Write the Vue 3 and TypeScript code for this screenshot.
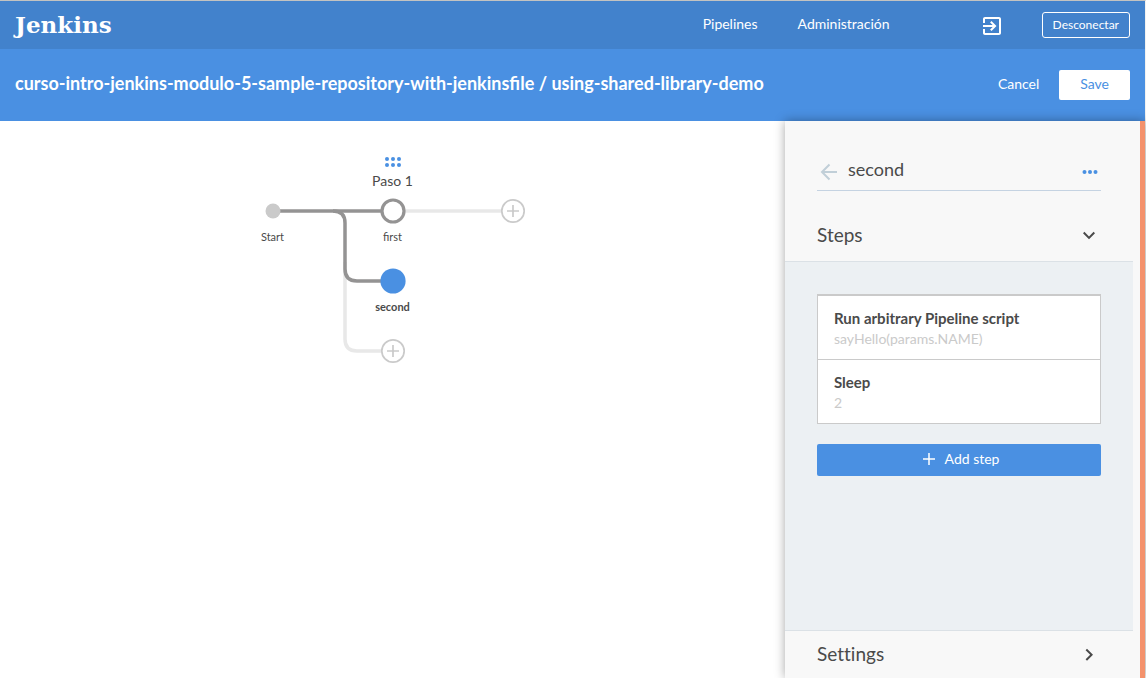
<script setup lang="ts">
import { ref } from 'vue'

interface GraphNode {
  id: string
  x: number
  y: number
  kind: 'start' | 'stage' | 'add'
  label: string
}

interface Step {
  title: string
  detail: string
}

const selected = ref('second')

const nodes: GraphNode[] = [
  { id: 'start', x: 16, y: 59, kind: 'start', label: 'Start' },
  { id: 'first', x: 136, y: 59, kind: 'stage', label: 'first' },
  { id: 'second', x: 136, y: 129, kind: 'stage', label: 'second' },
  { id: 'add-parallel', x: 136, y: 199, kind: 'add', label: '' },
  { id: 'add-stage', x: 256, y: 59, kind: 'add', label: '' },
]

const steps: Step[] = [
  { title: 'Run arbitrary Pipeline script', detail: 'sayHello(params.NAME)' },
  { title: 'Sleep', detail: '2' },
]

function select(node: GraphNode) {
  if (node.kind === 'stage') selected.value = node.id
}
</script>

<template>
  <div class="page">
    <header class="topbar">
      <a class="logo" href="#">Jenkins</a>
      <nav class="nav">
        <a href="#">Pipelines</a>
        <a href="#">Administración</a>
      </nav>
      <a class="exit" href="#" aria-label="Go to classic">
        <svg width="24" height="24" viewBox="0 0 24 24" fill="currentColor">
          <path d="M10.09 15.59L11.5 17l5-5-5-5-1.41 1.41L12.67 11H3v2h9.67l-2.58 2.59zM19 3H5c-1.11 0-2 .9-2 2v4h2V5h14v14H5v-4H3v4c0 1.1.89 2 2 2h14c1.1 0 2-.9 2-2V5c0-1.1-.9-2-2-2z" />
        </svg>
      </a>
      <button class="logout" type="button">Desconectar</button>
    </header>

    <div class="titlebar">
      <h1>curso-intro-jenkins-modulo-5-sample-repository-with-jenkinsfile / using-shared-library-demo</h1>
      <button class="cancel" type="button">Cancel</button>
      <button class="save" type="button">Save</button>
    </div>

    <div class="editor">
      <main class="canvas">
        <div class="graph">
          <svg class="lines" width="272" height="220" viewBox="0 0 272 220" fill="none">
            <g stroke="#e8e8e8" stroke-width="3.5">
              <path d="M148 59H244" />
              <path d="M88 110V187Q88 199 100 199H124" />
            </g>
            <g stroke="#949393" stroke-width="3.5">
              <path d="M20 59H124" />
              <path d="M76 59Q88 59 88 71V117Q88 129 100 129H128" />
            </g>
            <circle cx="16" cy="59" r="7.5" fill="#cacaca" />
            <g fill="#4a90e2">
              <circle v-for="n in 6" :key="n" :cx="130 + ((n - 1) % 3) * 6" :cy="n > 3 ? 13 : 7" r="2" />
            </g>
          </svg>
          <div class="stage-name">Paso 1</div>
          <div v-for="node in nodes" :key="node.id" class="node" :style="{ left: node.x + 'px', top: node.y + 'px' }">
            <button
              v-if="node.kind !== 'start'"
              type="button"
              class="dot"
              :aria-label="node.label || 'Add stage'"
              @click="select(node)"
            >
              <svg v-if="node.kind === 'add'" width="26" height="26" viewBox="0 0 26 26" fill="#fff" stroke="#cacaca" stroke-width="1.7">
                <circle cx="13" cy="13" r="11.2" />
                <path d="M13 7V19M7 13H19" />
              </svg>
              <svg v-else width="26" height="26" viewBox="0 0 26 26">
                <circle v-if="node.id === selected" cx="13" cy="13" r="12.6" fill="#4a90e2" />
                <circle v-else cx="13" cy="13" r="11" fill="#fff" stroke="#949393" stroke-width="3.2" />
              </svg>
            </button>
            <span v-if="node.label" :class="['label', { strong: node.id === selected }]">{{ node.label }}</span>
          </div>
        </div>
      </main>

      <aside class="panel">
        <div class="panel-head">
          <button type="button" class="icon back" aria-label="Back">
            <svg width="24" height="24" viewBox="0 0 24 24" fill="none" stroke="#c1cfd8" stroke-width="2">
              <path d="M20 12H5.5M12.5 4.5L5 12L12.5 19.5" />
            </svg>
          </button>
          <input v-model="selected" type="text" aria-label="Stage name" />
          <button type="button" class="icon" aria-label="More">
            <svg width="16" height="16" viewBox="0 0 16 16" fill="#4a90e2">
              <circle cx="2.5" cy="8" r="2" />
              <circle cx="8" cy="8" r="2" />
              <circle cx="13.5" cy="8" r="2" />
            </svg>
          </button>
        </div>

        <button type="button" class="section steps-head" aria-expanded="true">
          <span>Steps</span>
          <svg width="24" height="24" viewBox="0 0 24 24" fill="#4a4a4a">
            <path d="M7.41 7.84L12 12.42l4.59-4.58L18 9.25l-6 6-6-6z" />
          </svg>
        </button>

        <div class="section-body">
          <ul class="step-list">
            <li v-for="step in steps" :key="step.title">
              <strong>{{ step.title }}</strong>
              <span>{{ step.detail }}</span>
            </li>
          </ul>
          <button type="button" class="add-step">
            <svg width="12" height="12" viewBox="0 0 12 12" stroke="currentColor" stroke-width="1.5">
              <path d="M6 0V12M0 6H12" />
            </svg>
            <span>Add step</span>
          </button>
        </div>

        <button type="button" class="section" aria-expanded="false">
          <span>Settings</span>
          <svg width="24" height="24" viewBox="0 0 24 24" fill="#4a4a4a">
            <path d="M8.59 16.34l4.58-4.59-4.58-4.59L10 5.75l6 6-6 6z" />
          </svg>
        </button>
      </aside>
    </div>
  </div>
</template>

<style>
body {
  margin: 0;
  background: #fff;
}
</style>

<style scoped>
.page {
  box-sizing: border-box;
  display: flex;
  flex-direction: column;
  min-height: 100vh;
  border-top: 1px solid #c3c3c1;
  border-right: 1px solid #f2f2f0;
  color: #4a4a4a;
  font-family: Lato, "Open Sans", sans-serif;
  font-size: 14px;
  line-height: 20px;
}

button,
input {
  margin: 0;
  padding: 0;
  border: 0;
  background: none;
  color: inherit;
  font: inherit;
}

button {
  cursor: pointer;
}

a {
  color: inherit;
  text-decoration: none;
}

svg {
  display: block;
  flex: none;
}

.topbar {
  box-sizing: border-box;
  display: flex;
  align-items: center;
  height: 48px;
  padding: 0 15px;
  background: #4282cc;
  color: #fff;
}

.logo {
  flex: 1;
  font-family: "DejaVu Serif", Georgia, serif;
  font-size: 23px;
  font-weight: 700;
}

.nav {
  display: flex;
  gap: 40px;
  padding-bottom: 2px;
}

.exit {
  margin: 2px 38px 0 90px;
}

.logout {
  box-sizing: border-box;
  height: 26px;
  padding: 0 10px;
  border: 1px solid #fff;
  border-radius: 3px;
  font-size: 12px;
}

.titlebar {
  box-sizing: border-box;
  display: flex;
  align-items: center;
  height: 72px;
  padding: 0 15px;
  background: #4a90e2;
  color: #fff;
}

h1 {
  flex: 1;
  margin: 0;
  padding-bottom: 4px;
  font-size: 18px;
  font-weight: 700;
  line-height: 24px;
}

.cancel,
.save {
  height: 30px;
  padding-bottom: 2px;
}

.cancel {
  margin-right: 20px;
}

.save {
  padding-left: 21px;
  padding-right: 21px;
  border-radius: 2px;
  background: #fff;
  color: #4a90e2;
}

.editor {
  flex: 1;
  display: flex;
}

.canvas {
  flex: 1;
  padding-top: 31px;
}

.graph {
  position: relative;
  width: 272px;
  height: 220px;
  margin: 0 auto;
}

.stage-name {
  position: absolute;
  top: 19px;
  left: 136px;
  transform: translateX(-50%);
  white-space: nowrap;
}

.node {
  position: absolute;
  width: 0;
  height: 0;
}

.dot {
  position: absolute;
  top: -13px;
  left: -13px;
  border-radius: 50%;
}

.label {
  position: absolute;
  top: 18px;
  left: 0;
  transform: translateX(-50%);
  font-size: 11px;
  line-height: 16px;
}

.label.strong {
  font-weight: 700;
}

.panel {
  box-sizing: border-box;
  display: flex;
  flex-direction: column;
  width: 360px;
  border-right: 5px solid #f4926c;
  background: #f8f8f8;
  box-shadow: 0 0 10px rgba(0, 0, 0, 0.35);
}

.panel-head {
  display: flex;
  align-items: center;
  height: 36px;
  margin: 33px 39px 0 32px;
  border-bottom: 1px solid #c5d3e2;
}

.panel-head input {
  flex: 1;
  min-width: 0;
  margin: 0 0 6px 7px;
  font-size: 18px;
  line-height: 24px;
}

.icon {
  padding: 0 3px 0 0;
}

.back {
  padding: 0;
}

.section {
  display: flex;
  align-items: center;
  justify-content: space-between;
  height: 47px;
  margin-right: 7px;
  padding: 0 32px;
  font-size: 19px;
  font-variant-ligatures: none;
  text-align: left;
}

.section span {
  padding-bottom: 2px;
}

.steps-head {
  height: 50px;
  margin-top: 20px;
}

.section-body {
  flex: 1;
  margin-right: 7px;
  padding: 32px;
  border: solid #dbe1e6;
  border-width: 1px 0;
  background: #ecf0f3;
}

.step-list {
  margin: 0 0 20px;
  padding: 0;
  border: 1px solid #cacaca;
  background: #fff;
  list-style: none;
}

.step-list li {
  display: flex;
  flex-direction: column;
  box-sizing: border-box;
  height: 63px;
  padding: 11px 16px 0;
}

.step-list li:first-child {
  height: 65px;
  border-top: 1px solid #cacaca;
  border-bottom: 1px solid #cacaca;
}

.step-list strong {
  font-size: 15px;
  line-height: 22px;
}

.step-list span {
  color: #cacaca;
}

.add-step {
  display: flex;
  align-items: center;
  justify-content: center;
  gap: 10px;
  width: 100%;
  height: 32px;
  padding: 0 0 2px 4px;
  border-radius: 2px;
  background: #4a90e2;
  color: #fff;
}
</style>
